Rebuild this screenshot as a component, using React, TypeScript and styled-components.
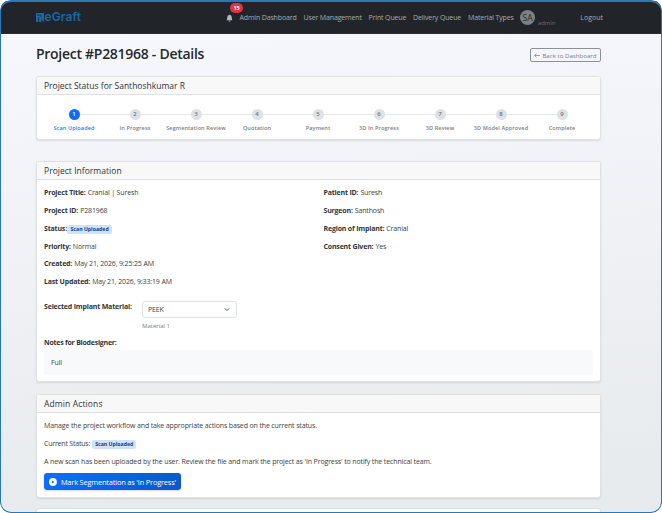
import React from 'react';
import styled, { createGlobalStyle } from 'styled-components';

const GlobalStyle = createGlobalStyle`
  * { box-sizing: border-box; }
  body {
    margin: 0;
    background: #fff;
    color: #3a3f44;
    font: 7px/10px "Open Sans", "Noto Sans", sans-serif;
    letter-spacing: -0.14px;
    overflow: hidden;
    white-space: nowrap;
  }
`;

const Frame = styled.div`
  position: relative;
  width: 662px;
  height: 513px;
  padding: 1px;
  border-radius: 11px;
  overflow: hidden;
  background: linear-gradient(175deg, #f6f7fc 8%, #e8ebee 92%);
  &::after {
    content: '';
    position: absolute;
    inset: 0;
    border: solid #2878b5;
    border-width: 2px 1px 1px;
    border-radius: 11px;
    pointer-events: none;
  }
`;

const Navbar = styled.header`
  display: flex;
  align-items: center;
  height: 33px;
  padding: 0 59px 0 35px;
  background: #212529;
  color: #a9abad;
  border-bottom: 1px solid #30292f;
`;

const Brand = styled.div`
  display: flex;
  align-items: center;
  width: 190px;
  color: #1b68a8;
  font-family: Inter, "Open Sans", sans-serif;
  font-size: 12px;
  font-weight: 600;
  letter-spacing: 0.1px;
  line-height: 14px;
`;

const LogoMark = styled.svg`
  width: 8px;
  height: 9px;
  margin-right: 0.5px;
`;

const Bell = styled.div`
  position: relative;
  width: 13.5px;
  height: 8px;
  margin-top: 1px;
  svg { display: block; width: 7px; height: 8px; }
`;

const Count = styled.span`
  position: absolute;
  left: 4px;
  top: -11px;
  width: 13px;
  height: 10px;
  border-radius: 5px;
  background: #dc3545;
  color: #fff;
  font-size: 5.5px;
  font-weight: 700;
  line-height: 10px;
  text-align: center;
`;

const NavLink = styled.a<{ $width: number }>`
  width: ${p => p.$width}px;
  margin-top: 1px;
`;

const Avatar = styled.span`
  width: 15px;
  height: 15px;
  border-radius: 50%;
  background: #7e8184;
  color: #25292d;
  font-size: 8.5px;
  line-height: 16px;
  text-align: center;
`;

const UserName = styled.span`
  padding: 11px 0 0 3px;
  color: #696d71;
  font-size: 6px;
  letter-spacing: -0.1px;
`;

const Logout = styled.a`
  margin: 1px -1px 0 auto;
  letter-spacing: 0;
`;

const Page = styled.main`
  display: flex;
  flex-direction: column;
  width: 565px;
  margin-left: 35px;
  padding-top: 11px;
`;

const TitleBar = styled.div`
  display: flex;
  align-items: center;
  justify-content: space-between;
  height: 18px;
  margin-bottom: 13px;
`;

const Title = styled.h1`
  margin: 0;
  color: #25292d;
  font-size: 14px;
  font-weight: 600;
  line-height: 18px;
  letter-spacing: -0.28px;
`;

const BackButton = styled.button`
  height: 14px;
  width: 71px;
  margin-top: 2px;
  padding: 0;
  border: 1px solid #8b9197;
  border-radius: 2px;
  background: transparent;
  color: #777e84;
  font: inherit;
  font-size: 6.1px;
  letter-spacing: 0.02px;
  line-height: 11px;
  svg { width: 6px; height: 5px; margin-right: 2px; }
`;

const Card = styled.section<{ $height: number; $gap: number }>`
  flex: none;
  height: ${p => p.$height}px;
  margin-bottom: ${p => p.$gap}px;
  border: 1px solid #dfe1e4;
  border-radius: 3px;
  background: #fff;
  box-shadow: 0 1px 2px rgba(0, 0, 0, 0.1);
`;

const CardTitle = styled.h2<{ $spacing?: number }>`
  height: 18px;
  margin: 0;
  padding-left: 7px;
  border-bottom: 1px solid #dfe0e2;
  border-radius: 2px 2px 0 0;
  background: #f8f8f9;
  color: #30353a;
  font-size: 8.5px;
  font-weight: 500;
  line-height: 17px;
  letter-spacing: ${p => p.$spacing ?? 0}px;
`;

const Steps = styled.ol`
  display: grid;
  grid-template-columns: repeat(9, 61px);
  margin: 13.5px 0 0 6.5px;
  padding: 0;
  list-style: none;
`;

const Step = styled.li<{ $active?: boolean }>`
  position: relative;
  display: flex;
  flex-direction: column;
  align-items: center;
  gap: 4.5px;
  color: ${p => (p.$active ? '#2478fb' : '#777d83')};
  font-size: 5.5px;
  font-weight: 600;
  line-height: 9px;
  letter-spacing: 0.12px;
  &:not(:last-child)::after {
    content: '';
    position: absolute;
    left: 36px;
    top: 5px;
    width: 50px;
    height: 1px;
    background: #e5e8eb;
  }
`;

const StepDot = styled.span<{ $active?: boolean }>`
  width: 11px;
  height: 11px;
  border-radius: 50%;
  background: ${p => (p.$active ? '#0d6efd' : '#dee2e6')};
  color: ${p => (p.$active ? '#fff' : '#6c757d')};
  font-size: 6px;
  line-height: 11px;
  text-align: center;
`;

const Facts = styled.div`
  display: grid;
  grid-template-columns: 279.5px 1fr;
  padding: 4.6px 7px 0;
`;

const FactColumn = styled.div`
  display: flex;
  flex-direction: column;
`;

const Fact = styled.div<{ $tight?: boolean }>`
  display: flex;
  align-items: center;
  gap: ${p => (p.$tight ? 0.5 : 2)}px;
  height: 17.75px;
  letter-spacing: -0.14px;
`;

const Label = styled.strong`
  color: #30353a;
  font-weight: 700;
  letter-spacing: -0.18px;
`;

const Badge = styled.span`
  display: inline-block;
  height: 9px;
  padding: 0 3px;
  border-radius: 2px;
  background: #cfe2ff;
  color: #123f7d;
  font-size: 5.2px;
  font-weight: 700;
  line-height: 9px;
  letter-spacing: 0;
`;

const MaterialRow = styled.div`
  display: flex;
  margin-top: 9.7px;
  padding-left: 7px;
`;

const MaterialLabel = styled(Label)`
  width: 98px;
  padding-top: 1px;
  letter-spacing: -0.18px;
`;

const Select = styled.div`
  display: flex;
  align-items: center;
  justify-content: space-between;
  width: 95px;
  height: 17px;
  padding: 2px 6px 0 5px;
  border: 1px solid #dee2e6;
  border-radius: 3px;
  svg { width: 6px; height: 5px; margin-top: -2px; }
`;

const Hint = styled.div`
  margin-top: 3px;
  color: #7b8085;
  font-size: 6.1px;
  letter-spacing: -0.05px;
`;

const NotesLabel = styled(Label)`
  display: block;
  margin: 7px 0 2.5px 7px;
  letter-spacing: -0.24px;
`;

const Notes = styled.div`
  height: 25px;
  margin: 0 7px;
  padding-left: 7px;
  border-radius: 2px;
  background: #f8f9fa;
  line-height: 26px;
`;

const Actions = styled.div`
  display: flex;
  flex-direction: column;
  align-items: flex-start;
  padding: 8px 7px 0;
`;

const Paragraph = styled.p<{ $spacing?: number }>`
  display: flex;
  align-items: center;
  gap: 2px;
  height: 10px;
  margin: 0 0 8px;
  letter-spacing: ${p => p.$spacing ?? -0.14}px;
`;

const PrimaryButton = styled.button`
  display: flex;
  align-items: center;
  gap: 4px;
  width: 137px;
  height: 17px;
  margin-top: -2px;
  padding: 0 5px;
  border: 0;
  border-radius: 3px;
  background: linear-gradient(135deg, #0d6efd, #0a58ca);
  box-shadow: 0 1px 2px rgba(0, 0, 0, 0.15);
  color: #fff;
  font: inherit;
  font-size: 7.4px;
  letter-spacing: -0.17px;
  svg { width: 8px; height: 8px; }
`;

const STEPS = [
  'Scan Uploaded', 'In Progress', 'Segmentation Review', 'Quotation', 'Payment',
  '3D In Progress', '3D Review', '3D Model Approved', 'Complete',
];

const LINKS: [string, number][] = [
  ['Admin Dashboard', 64], ['User Management', 65], ['Print Queue', 44.5],
  ['Delivery Queue', 55], ['Material Types', 52],
];

const LEFT_FACTS: [string, React.ReactNode][] = [
  ['Project Title:', 'Cranial | Suresh'],
  ['Project ID:', 'P281968'],
  ['Status:', <Badge key="b">Scan Uploaded</Badge>],
  ['Priority:', 'Normal'],
  ['Created:', 'May 21, 2026, 9:25:25 AM'],
  ['Last Updated:', 'May 21, 2026, 9:33:19 AM'],
];

const RIGHT_FACTS: [string, React.ReactNode][] = [
  ['Patient ID:', 'Suresh'],
  ['Surgeon:', 'Santhosh'],
  ['Region of Implant:', 'Cranial'],
  ['Consent Given:', 'Yes'],
];

const FactList = ({ items }: { items: [string, React.ReactNode][] }) => (
  <FactColumn>
    {items.map(([label, value]) => (
      <Fact key={label} $tight={typeof value !== 'string'}>
        <Label>{label}</Label>
        <span>{value}</span>
      </Fact>
    ))}
  </FactColumn>
);

export default function App() {
  return (
    <>
      <GlobalStyle />
      <Frame>
        <Navbar>
          <Brand>
            <LogoMark viewBox="0 0 8 9">
              <path d="M0 0h8v9H0z" fill="#1b68a8" />
              <path d="M1.2 2.1h3.6v2M2.6 4.4V9" fill="none" stroke="#212529" strokeWidth=".8" />
              <path d="M5 5.4 7.6 9H5.6z" fill="#212529" />
            </LogoMark>
            eGraft
          </Brand>
          <Bell>
            <svg viewBox="0 0 16 16" fill="#b6b8ba">
              <path d="M8 16a2 2 0 0 0 2-2H6a2 2 0 0 0 2 2m.995-14.901a1 1 0 1 0-1.99 0A5 5 0 0 0 3 6c0 1.098-.5 6-2 7h14c-1.5-1-2-5.902-2-7 0-2.42-1.72-4.44-4.005-4.901" />
            </svg>
            <Count>15</Count>
          </Bell>
          {LINKS.map(([text, width]) => <NavLink key={text} $width={width}>{text}</NavLink>)}
          <Avatar>SA</Avatar>
          <UserName>admin</UserName>
          <Logout>Logout</Logout>
        </Navbar>
        <Page>
          <TitleBar>
            <Title>Project #P281968 - Details</Title>
            <BackButton>
              <svg viewBox="0 0 6 5" fill="none" stroke="#777e84" strokeWidth=".7">
                <path d="M6 2.5H.6M2.5.6.6 2.5l1.9 1.9" />
              </svg>
              Back to Dashboard
            </BackButton>
          </TitleBar>
          <Card $height={64} $gap={21}>
            <CardTitle>Project Status for Santhoshkumar R</CardTitle>
            <Steps>
              {STEPS.map((name, i) => (
                <Step key={name} $active={i === 0}>
                  <StepDot $active={i === 0}>{i + 1}</StepDot>
                  {name}
                </Step>
              ))}
            </Steps>
          </Card>
          <Card $height={221} $gap={12}>
            <CardTitle $spacing={0.03}>Project Information</CardTitle>
            <Facts>
              <FactList items={LEFT_FACTS} />
              <FactList items={RIGHT_FACTS} />
            </Facts>
            <MaterialRow>
              <MaterialLabel>Selected Implant Material:</MaterialLabel>
              <div>
                <Select>
                  PEEK
                  <svg viewBox="0 0 6 5" fill="none" stroke="#343a40" strokeWidth=".8" strokeLinecap="round" strokeLinejoin="round">
                    <path d="M1 1.5 3 3.5 5 1.5" />
                  </svg>
                </Select>
                <Hint>Material 1</Hint>
              </div>
            </MaterialRow>
            <NotesLabel>Notes for Biodesigner:</NotesLabel>
            <Notes>Full</Notes>
          </Card>
          <Card $height={104} $gap={10}>
            <CardTitle $spacing={0.12}>Admin Actions</CardTitle>
            <Actions>
              <Paragraph>Manage the project workflow and take appropriate actions based on the current status.</Paragraph>
              <Paragraph $spacing={-0.2}>Current Status: <Badge>Scan Uploaded</Badge></Paragraph>
              <Paragraph $spacing={-0.13}>
                A new scan has been uploaded by the user. Review the file and mark the project as 'In Progress' to notify the technical team.
              </Paragraph>
              <PrimaryButton>
                <svg viewBox="0 0 16 16">
                  <circle cx="8" cy="8" r="8" fill="#fff" />
                  <path d="M6 4.8v6.4L11 8z" fill="#0d6efd" />
                </svg>
                Mark Segmentation as 'In Progress'
              </PrimaryButton>
            </Actions>
          </Card>
          <Card $height={30} $gap={0} />
        </Page>
      </Frame>
    </>
  );
}
